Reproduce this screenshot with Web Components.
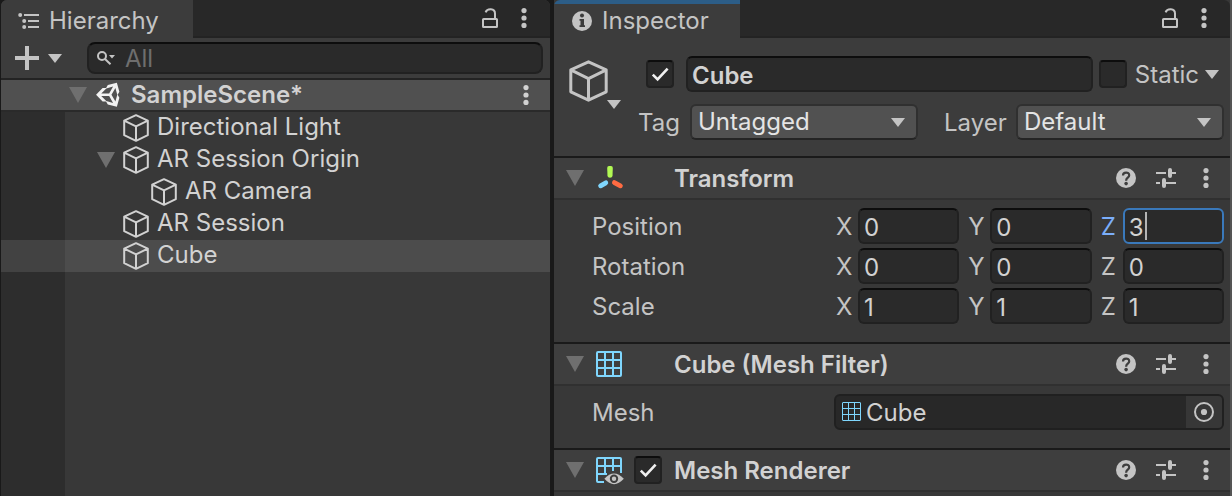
<!DOCTYPE html>
<html lang="en">
<head>
<meta charset="utf-8">
<title>Editor</title>
<style>
  body { margin: 0; background: #191919; color: #c4c4c4; font: 24px/28px Inter, "Liberation Sans", sans-serif; }
</style>
</head>
<body>
<editor-window>
  <hierarchy-panel>
    <scene-item kind="scene" open>SampleScene*</scene-item>
    <scene-item>Directional Light</scene-item>
    <scene-item open>AR Session Origin</scene-item>
    <scene-item depth="1">AR Camera</scene-item>
    <scene-item>AR Session</scene-item>
    <scene-item selected>Cube</scene-item>
  </hierarchy-panel>
  <inspector-panel>
    <component-section heading="Transform" icon="transform">
      <vector-row label="Position" values="0 0 3" active="2"></vector-row>
      <vector-row label="Rotation" values="0 0 0"></vector-row>
      <vector-row label="Scale" values="1 1 1"></vector-row>
    </component-section>
    <component-section heading="Cube (Mesh Filter)" icon="mesh">
      <object-row label="Mesh">Cube</object-row>
    </component-section>
    <component-section heading="Mesh Renderer" icon="renderer" toggle></component-section>
  </inspector-panel>
</editor-window>

<script>
const cube = '<path d="M13 1.2 24.8 6.6V21.2L13 26.8 1.2 21.2V6.6ZM1.2 6.6 13 12.4 24.8 6.6M13 12.4V26.8" fill="none" stroke="currentColor" stroke-width="2" stroke-linejoin="round"/>';
const ICONS = {
  cube: [26, 28, cube],
  bigcube: [39, 42, `<g transform="scale(1.5)">${cube}</g>`],
  fold: [18, 16, '<path d="M0 0H18L9 16Z" fill="#6f6f6f"/>'],
  arrow: [14, 9, '<path d="M0 0H14L7 9Z" fill="currentColor"/>'],
  list: [22, 18, '<g fill="currentColor"><circle cx="2.2" cy="3" r="2"/><circle cx="6.2" cy="9" r="2"/><circle cx="6.2" cy="15" r="2"/><path d="M6 2H21V4H6ZM10 8H21V10H10ZM10 14H21V16H10Z"/></g>'],
  info: [20, 20, '<circle cx="10" cy="10" r="10" fill="currentColor"/><g fill="#3c3c3c"><circle cx="10" cy="4.4" r="2"/><path d="M7.5 8H12V14.2H13V16H7.5V14.2H8.5V9.8H7.5Z"/></g>'],
  plus: [24, 24, '<path d="M12 0V24M0 12H24" stroke="currentColor" stroke-width="4"/>'],
  search: [18, 14, '<g fill="none" stroke="currentColor" stroke-width="2"><circle cx="5" cy="5" r="4"/><path d="M8 8 13.5 13.2"/></g><path d="M12 4H18L15 7.5Z" fill="currentColor"/>'],
  lock: [16, 20, '<g fill="none" stroke="currentColor" stroke-width="2"><rect x="1" y="11" width="14" height="8" rx=".6"/><path d="M3.6 4.4C5.2 .2 13 .1 13 5.6V11"/></g>'],
  dots: [6, 20, '<g fill="currentColor"><circle cx="3" cy="2.6" r="2.6"/><circle cx="3" cy="10" r="2.6"/><circle cx="3" cy="17.4" r="2.6"/></g>'],
  help: [20, 20, '<circle cx="10" cy="10" r="10" fill="currentColor"/><path d="M7 7.4C7 3.6 13.2 3.7 13.2 7.2 13.2 9.7 10.1 9.6 10.1 12.7" fill="none" stroke="#3e3e3e" stroke-width="2.2"/><circle cx="10.1" cy="15.6" r="1.8" fill="#3e3e3e"/>'],
  sliders: [20, 20, '<path d="M0 5H10M16 5H20M0 15H4M10 15H20" stroke="currentColor" stroke-width="2"/><path d="M14 2V8M8 12V18" stroke="currentColor" stroke-width="4" stroke-linecap="round"/>'],
  unity: [24, 24, '<path transform="scale(1.333) translate(-.8 -3.2)" fill="#f2f2f2" d="M9.11 17H6.5L1.59 12 6.5 7H9.11L10.42 4.74 17.21 3 19.08 9.74 17.77 12 19.08 14.26 17.21 21 10.42 19.26ZM9.25 16.75 14.38 18.13 11.42 13H5.5ZM16.12 17.13 17.5 12 16.12 6.87 13.15 12ZM9.25 7.25 5.5 11H11.42L14.38 5.87Z" fill-rule="evenodd"/>'],
  check: [28, 28, '<path d="M6.8 14.6 11.6 19.4 21.6 8.6" fill="none" stroke="#f0f0f0" stroke-width="2.6"/>'],
  transform: [26, 26, '<path d="M11.2 3A2 2 0 0 1 13 1H15A2 2 0 0 1 16.8 3L16.5 11Q16.2 12.8 14 12.8T11.5 11Z" fill="#b2f954"/><path d="M9.8 17.8 4.6 20.8" stroke="#7fd6fd" stroke-width="4.8" stroke-linecap="round"/><path d="M18.4 17.6 24.4 20.8" stroke="#ff6b42" stroke-width="4.8" stroke-linecap="round"/>'],
  mesh: [26, 26, '<g fill="none" stroke="#7fd6fd" stroke-width="2"><rect x="1" y="1" width="24" height="24" rx="1"/><path d="M9 1V25M17 1V25M1 9H25M1 17H25"/></g>'],
  renderer: [26, 26, '<g fill="none" stroke="#7fd6fd" stroke-width="2"><path d="M8 25H2Q1 25 1 24V2Q1 1 2 1H24Q25 1 25 2V16M9 1V17M17 1V14M1 9H25M1 17H11"/></g><path d="M8.4 21.8Q18 11 27.8 21.8 18 32.6 8.4 21.8Z" fill="#c4c4c4"/><circle cx="18" cy="21.8" r="3.2" fill="none" stroke="#3e3e3e" stroke-width="2"/>'],
  meshsmall: [20, 20, '<g fill="none" stroke="#7fd6fd" stroke-width="1"><rect x=".5" y=".5" width="18" height="18" rx=".5"/><path d="M6.5 .5V19M12.5 .5V19M.5 6.5H19M.5 12.5H19"/></g>'],
  target: [20, 20, '<circle cx="10" cy="10" r="9" fill="none" stroke="currentColor" stroke-width="2"/><circle cx="10" cy="10" r="3.1" fill="currentColor"/>']
};
const icon = (name, cls = '') => {
  const [w, h, body] = ICONS[name];
  return `<svg class="${cls}" width="${w}" height="${h}" viewBox="0 0 ${w} ${h}" aria-hidden="true">${body}</svg>`;
};
const BASE = `
  *, :host { box-sizing: border-box; }
  svg { display: block; flex: none; overflow: visible; }
  button { appearance: none; border: 0; margin: 0; padding: 0; background: none; color: inherit; font: inherit; display: flex; align-items: center; justify-content: center; }
  input, select { font: inherit; color: #d2d2d2; margin: 0; outline: 0; min-width: 0; }
  .text { padding-top: 2px; }
  .field { width: 100%; height: 36px; padding: 2px 4px 0; background: #2a2a2a; border: 2px solid #212121; border-top-color: #0d0d0d; border-radius: 6px; }
`;
class Base extends HTMLElement {
  connectedCallback() {
    if (this.shadowRoot) return;
    const t = document.createElement('template');
    t.innerHTML = `<style>${BASE}${this.css()}</style>${this.html()}`;
    this.attachShadow({ mode: 'open' }).append(t.content.cloneNode(true));
  }
}

customElements.define('editor-window', class extends Base {
  css() { return `:host { display: grid; grid-template-columns: 549fr 676fr; gap: 4px; min-height: 100vh; padding-left: 1px; border-right: 2px solid #555; }`; }
  html() { return '<slot></slot>'; }
});

customElements.define('tab-bar', class extends Base {
  css() { return `
    :host { display: flex; height: 38px; background: #3c3c3c; border-radius: 6px 6px 0 0; overflow: hidden; }
    .tab { display: flex; align-items: center; gap: 9px; padding: 4px 34px 0 17px; background: #3c3c3c; }
    :host([focused]) .tab { gap: 10px; border-top: 4px solid #2c5d87; padding: 0 31px 0 18px; }
    .rest { flex: 1; display: flex; justify-content: flex-end; padding-right: 9px; background: #282828; border-bottom: 2px solid #232323; }
    button { width: 34px; }`; }
  html() { return `<div class="tab">${icon(this.getAttribute('icon'))}<slot></slot></div>
    <div class="rest"><button aria-label="Lock">${icon('lock')}</button><button aria-label="Menu">${icon('dots')}</button></div>`; }
});

customElements.define('check-box', class extends Base {
  css() { return `
    :host { display: grid; width: 28px; height: 28px; flex: none; }
    input, svg { grid-area: 1 / 1; }
    input { appearance: none; width: 28px; height: 28px; background: #2a2a2a; border: 2px solid #212121; border-top-color: #0d0d0d; border-radius: 4px; }
    svg { pointer-events: none; display: none; }
    input:checked + svg { display: block; }`; }
  html() { return `<input type="checkbox" aria-label="${this.getAttribute('label')}"${this.hasAttribute('checked') ? ' checked' : ''}>${icon('check')}`; }
});

customElements.define('drop-down', class extends Base {
  css() { return `
    :host { display: grid; align-items: center; }
    select, svg { grid-area: 1 / 1; }
    select { appearance: none; width: 100%; height: 36px; padding: 0 32px 0 6px; color: #e4e4e4; background: #515151; border: 2px solid #303030; border-bottom-color: #242424; border-radius: 6px; }
    svg { justify-self: end; margin-right: 13px; pointer-events: none; }`; }
  html() { const v = this.getAttribute('value'); return `<select aria-label="${this.getAttribute('label')}"><option>${v}</option></select>${icon('arrow')}`; }
});

customElements.define('hierarchy-panel', class extends Base {
  css() { return `
    :host { display: flex; flex-direction: column; min-width: 0; }
    .tools { display: flex; align-items: center; height: 42px; padding: 0 7px 0 14px; background: #3c3c3c; border-bottom: 2px solid #232323; }
    .add { gap: 9px; margin-right: 25px; }
    .search { flex: 1; display: grid; align-items: center; min-width: 0; }
    .search > * { grid-area: 1 / 1; }
    .search svg { margin-left: 10px; }
    .field { height: 32px; border-radius: 8px; padding: 0 8px 0 36px; }
    .field::placeholder { color: #6e6e6e; opacity: 1; }
    .list { flex: 1; background: linear-gradient(to right, #2d2d2d 64px, #383838 64px); }`; }
  html() { return `<tab-bar icon="list">Hierarchy</tab-bar>
    <div class="tools"><button class="add" aria-label="Add">${icon('plus')}${icon('arrow')}</button>
      <label class="search"><input class="field" type="text" placeholder="All" aria-label="Search">${icon('search')}</label></div>
    <div class="list"><slot></slot></div>`; }
});

customElements.define('scene-item', class extends Base {
  css() { return `
    :host { display: flex; align-items: center; height: 32px; padding-left: 96px; color: #d2d2d2; }
    :host([depth="1"]) { padding-left: 124px; }
    :host([selected]) { background: rgb(255 255 255 / .1); }
    :host([kind="scene"]) { padding-left: 68px; background: #505050; border-bottom: 2px solid #2a2a2a; font-weight: 600; }
    .fold { display: flex; width: 18px; margin-right: 8px; }
    .name { margin-left: 8px; padding-bottom: 3px; white-space: nowrap; }
    :host([kind="scene"]) .name { margin-left: 12px; padding: 0; }
    button.more { width: 34px; margin: 0 7px 0 auto; }`; }
  html() {
    const scene = this.getAttribute('kind') === 'scene';
    return `<span class="fold">${this.hasAttribute('open') ? icon('fold') : ''}</span>${icon(scene ? 'unity' : 'cube')}
      <span class="name"><slot></slot></span>${scene ? `<button class="more" aria-label="Scene menu">${icon('dots')}</button>` : ''}`;
  }
});

customElements.define('inspector-panel', class extends Base {
  css() { return `
    :host { display: block; min-width: 0; background: #383838; }
    .head { display: flex; padding: 18px 6px 16px 15px; background: #3c3c3c; }
    .object { position: relative; align-self: flex-start; margin: 4px 30px 0 0; }
    .object .mini { position: absolute; left: 38px; top: 40px; }
    .main { flex: 1; display: grid; gap: 12px; min-width: 0; }
    .row { display: flex; align-items: center; padding: 0 5px 0 8px; }
    .name { flex: 1; margin: 0 6px 0 12px; font-weight: 600; }
    .static { display: flex; align-items: center; gap: 6px; margin-left: 8px; }
    .picks { display: grid; grid-template-columns: 52px 228fr 26px 72px 208fr; align-items: center; }
    .picks :nth-child(3) { grid-column: 4; }`; }
  html() { return `<tab-bar icon="info" focused>Inspector</tab-bar>
    <div class="head">
      <button class="object" aria-label="Object icon">${icon('bigcube')}${icon('arrow', 'mini')}</button>
      <div class="main">
        <div class="row"><check-box label="Active" checked></check-box><input class="field name" type="text" value="Cube" aria-label="Name">
          <check-box label="Static"></check-box><button class="static"><span class="text">Static</span>${icon('arrow')}</button></div>
        <div class="picks"><span class="text">Tag</span><drop-down label="Tag" value="Untagged"></drop-down><span class="text">Layer</span><drop-down label="Layer" value="Default"></drop-down></div>
      </div>
    </div><slot></slot>`; }
});

customElements.define('component-section', class extends Base {
  css() { return `
    :host { display: block; }
    header { display: grid; grid-template-columns: 18px 26px 28px 1fr auto; column-gap: 12px; align-items: center; height: 44px; padding: 0 4px 0 12px; background: #3e3e3e; border-top: 2px solid #1a1a1a; border-bottom: 2px solid #303030; }
    h2 { margin: 0; font: inherit; font-weight: 600; color: #d2d2d2; grid-column: 4; white-space: nowrap; }
    .acts { display: flex; }
    .acts button { width: 40px; height: 40px; }
    .body { display: grid; gap: 4px; padding: 8px 6px 18px 38px; }`; }
  html() { return `<header><button aria-label="Fold">${icon('fold')}</button>${icon(this.getAttribute('icon'))}
      ${this.hasAttribute('toggle') ? '<check-box label="Enabled" checked></check-box>' : ''}<h2 class="text">${this.getAttribute('heading')}</h2>
      <div class="acts"><button aria-label="Help">${icon('help')}</button><button aria-label="Presets">${icon('sliders')}</button><button aria-label="More">${icon('dots')}</button></div></header>
    ${this.children.length ? '<div class="body"><slot></slot></div>' : ''}`; }
});

const ROW = ':host { display: grid; grid-template-columns: 242fr 390fr; align-items: center; }';
customElements.define('vector-row', class extends Base {
  css() { return `${ROW}
    .axes { display: grid; grid-template-columns: repeat(3, 1fr); gap: 7px; }
    label { position: relative; display: grid; grid-template-columns: 24px 1fr; align-items: center; }
    label span { padding-left: 2px; }
    .on span { color: #7baefa; }
    .on .field { border-color: #3a79bb; caret-color: transparent; }
    .on i { position: absolute; left: 46px; top: 4px; width: 2px; height: 28px; background: #b4b4b4; }`; }
  html() {
    const values = this.getAttribute('values').split(' '), active = this.getAttribute('active');
    return `<span class="text">${this.getAttribute('label')}</span><div class="axes">${['X', 'Y', 'Z'].map((a, i) =>
      `<label class="${active === String(i) ? 'on' : ''}"><span class="text">${a}</span><input class="field" type="text" value="${values[i]}">${active === String(i) ? '<i></i>' : ''}</label>`).join('')}</div>`;
  }
});

customElements.define('object-row', class extends Base {
  css() { return `${ROW}
    .slot { display: flex; align-items: center; height: 36px; padding-left: 6px; background: #282828; border: 2px solid #202020; border-radius: 6px; overflow: hidden; color: #d2d2d2; }
    .slot span { flex: 1; margin-left: 4px; }
    button { width: 36px; height: 32px; background: #373737; color: #c4c4c4; }`; }
  html() { return `<span class="text">${this.getAttribute('label')}</span><div class="slot">${icon('meshsmall')}<span class="text"><slot></slot></span><button aria-label="Select object">${icon('target')}</button></div>`; }
});
</script>
</body>
</html>
